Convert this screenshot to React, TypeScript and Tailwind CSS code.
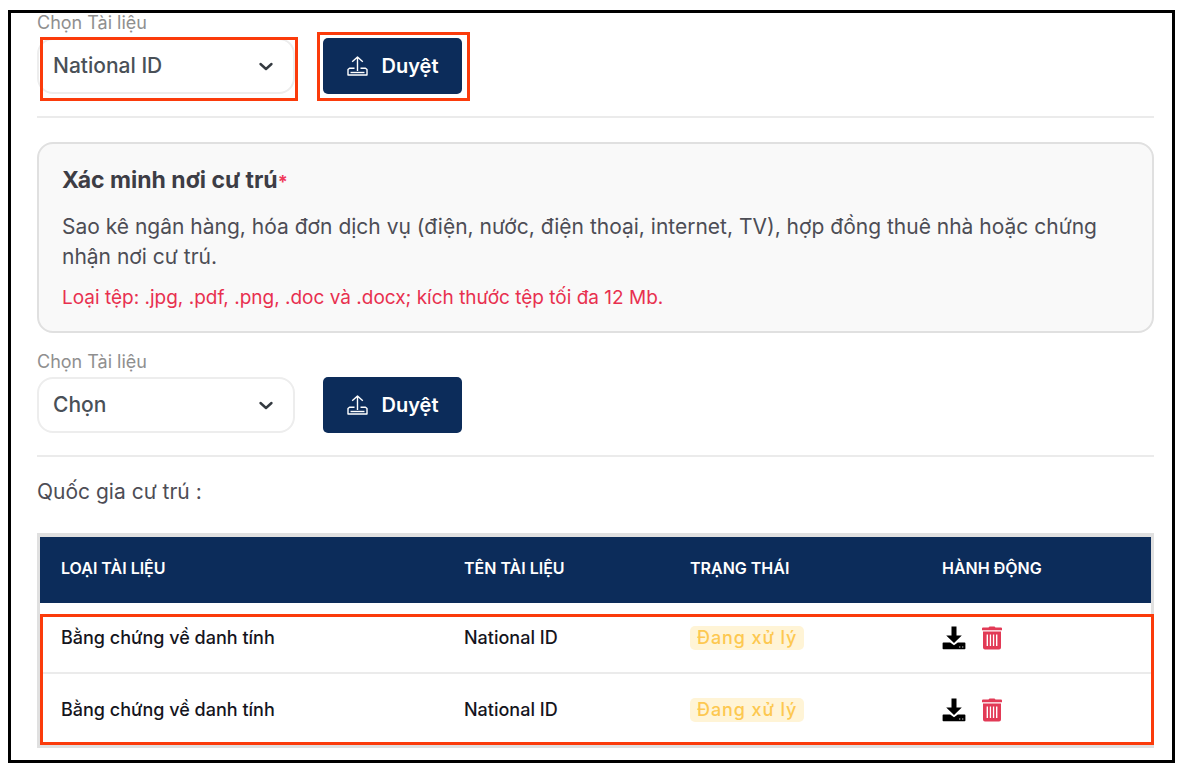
import React from 'react'

const documents = [
  { id: 1, type: 'Bằng chứng về danh tính', name: 'National ID', status: 'Đang xử lý' },
  { id: 2, type: 'Bằng chứng về danh tính', name: 'National ID', status: 'Đang xử lý' },
]

function UploadIcon() {
  return (
    <svg className="h-5 w-[21px]" viewBox="0 0 21 20" fill="none" stroke="currentColor" strokeWidth="1.4" strokeLinejoin="round" aria-hidden="true">
      <path d="M10.5 15V1M5.200 5.800 10.500 1l5.300 4.800" />
      <path d="M7.500 12.200H2.500L1 13.500V19h19v-5.500l-1.500-1.300h-5" />
      <path d="M3.500 16.500h14" />
    </svg>
  )
}

function ChevronIcon() {
  return (
    <svg
      className="pointer-events-none absolute top-1/2 right-[21px] h-4 w-4 -translate-y-1/2"
      viewBox="0 0 16 16"
      fill="none"
      stroke="#343a40"
      strokeWidth="2.4"
      strokeLinecap="round"
      strokeLinejoin="round"
      aria-hidden="true"
    >
      <path d="m2.5 6 5.5 5 5.5-5" />
    </svg>
  )
}

function DownloadIcon() {
  return (
    <svg className="h-6 w-6" viewBox="0 0 24 24" fill="#000" aria-hidden="true">
      <path d="M9.500.5h5v9h5.300L12 17 4.200 9.500h5.300z" />
      <path
        fillRule="evenodd"
        d="M1.400 16.500h6.800l3.800 2.800 3.800-2.800h6.800a.8.8 0 0 1 .8.8v5.200a.8.8 0 0 1-.8.8H1.400a.8.8 0 0 1-.8-.8v-5.200a.8.8 0 0 1 .8-.8zM17.200 20.500v1h1.100v-1zM20.200 20.500v1h1.100v-1z"
      />
    </svg>
  )
}

function TrashIcon() {
  return (
    <svg className="h-6 w-5" viewBox="0 0 20 24" fill="#e23a56" aria-hidden="true">
      <path d="M6.500 1.500 7.500.5h5l1 1H19a1 1 0 0 1 1 1v1.700H0V2.500a1 1 0 0 1 1-1z" />
      <path
        fillRule="evenodd"
        d="M1 5.500h18v16a2 2 0 0 1-2 2H3a2 2 0 0 1-2-2zM4.600 8.500v11.500h1.400V8.500zM7.800 8.500v11.500h1.300V8.500zM10.900 8.500v11.500h1.300V8.500zM14 8.500v11.500h1.400V8.500z"
      />
    </svg>
  )
}

function DocumentPicker({ id, option, highlighted }: { id: string; option: string; highlighted?: boolean }) {
  return (
    <div className="flex items-end gap-7">
      <div className="w-[258px]">
        <label htmlFor={id} className="mb-[5px] block text-lg leading-5 text-[#8f8f8f]">
          Chọn Tài liệu
        </label>
        <div className="relative">
          <select
            id={id}
            className="block h-14 w-full appearance-none rounded-2xl border-2 border-[#ededed] bg-white pr-10 pl-[14px] text-[21px] font-medium text-[#495057]"
          >
            <option>{option}</option>
          </select>
          <ChevronIcon />
          {highlighted && (
            <div className="pointer-events-none absolute -top-px -right-[3px] -bottom-[7px] left-[3px] border-3 border-[#fb3b0b]" />
          )}
        </div>
      </div>
      <div className="relative">
        <button
          type="button"
          className="flex h-14 w-[139px] items-center justify-center gap-[14px] rounded-[5px] bg-[#0c2c5a] text-xl font-semibold text-white"
        >
          <UploadIcon />
          Duyệt
        </button>
        {highlighted && (
          <div className="pointer-events-none absolute -top-[6px] -right-2 -bottom-[7px] -left-[6px] border-3 border-[#fb3b0b]" />
        )}
      </div>
    </div>
  )
}

export default function App() {
  return (
    <div className="bg-white pt-[10px] pr-[7px] pb-[6px] pl-2 font-['Inter','Noto_Sans',sans-serif]">
      <main className="border-3 border-black pr-[18px] pb-3 pl-[26px]">
        <DocumentPicker id="identity-document" option="National ID" highlighted />

        <hr className="mt-[22px] border-t-2 border-[#ebebeb]" />

        <section className="mt-6 rounded-2xl border-2 border-[#e0e0e0] bg-[#f9f9f9] px-[23px] pt-5 pb-[21px]">
          <h2 className="text-[23px] leading-8 font-bold text-[#3d3d45]">
            Xác minh nơi cư trú<span className="text-lg leading-6 text-[#f0395a]">*</span>
          </h2>
          <p className="mt-4 text-[21px] leading-[30px] text-[#4d4d55]">
            Sao kê ngân hàng, hóa đơn dịch vụ (điện, nước, điện thoại, internet, TV), hợp đồng thuê nhà hoặc chứng nhận
            nơi cư trú.
          </p>
          <p className="mt-[14px] text-[19px] leading-6 text-[#e8304f]">
            Loại tệp: .jpg, .pdf, .png, .doc và .docx; kích thước tệp tối đa 12 Mb.
          </p>
        </section>

        <div className="mt-[19px]">
          <DocumentPicker id="residence-document" option="Chọn" />
        </div>

        <hr className="mt-[22px] border-t-2 border-[#ebebeb]" />

        <p className="mt-5 text-[21px] leading-[30px] text-[#4d4d55]">Quốc gia cư trú :</p>

        <div className="relative mt-[26px] border-3 border-t-4 border-[#e0e0e0]">
          <table className="w-full table-fixed border-separate border-spacing-0 text-left">
            <thead>
              <tr className="h-[66px] bg-[#0c2c5a] text-base text-white uppercase">
                <th className="w-[403px] pb-1 pl-[21px] font-semibold">Loại tài liệu</th>
                <th className="w-[226px] pb-1 pl-[21px] font-semibold">Tên tài liệu</th>
                <th className="w-[252px] pb-1 pl-[21px] font-semibold">Trạng thái</th>
                <th className="pb-1 pl-[21px] font-semibold">Hành động</th>
              </tr>
            </thead>
            <tbody className="[&>tr:first-child>td]:border-b-2">
              {documents.map((doc) => (
                <tr key={doc.id} className="h-[71px] text-lg leading-6 font-medium text-[#15151d] *:border-[#ebebeb]">
                  <td className="pl-[21px]">{doc.type}</td>
                  <td className="pl-[21px]">{doc.name}</td>
                  <td className="pl-[21px]">
                    <span className="inline-block rounded-[5px] bg-[#fff4d6] px-[7px] tracking-wider text-[#fdc850]">
                      {doc.status}
                    </span>
                  </td>
                  <td className="pl-[21px]">
                    <div className="flex gap-4">
                      <button type="button" aria-label="Tải xuống">
                        <DownloadIcon />
                      </button>
                      <button type="button" aria-label="Xóa">
                        <TrashIcon />
                      </button>
                    </div>
                  </td>
                </tr>
              ))}
            </tbody>
          </table>
          <div className="pointer-events-none absolute top-[77px] -right-[3px] bottom-0 left-0 border-3 border-[#fb3b0b]" />
        </div>
      </main>
    </div>
  )
}
